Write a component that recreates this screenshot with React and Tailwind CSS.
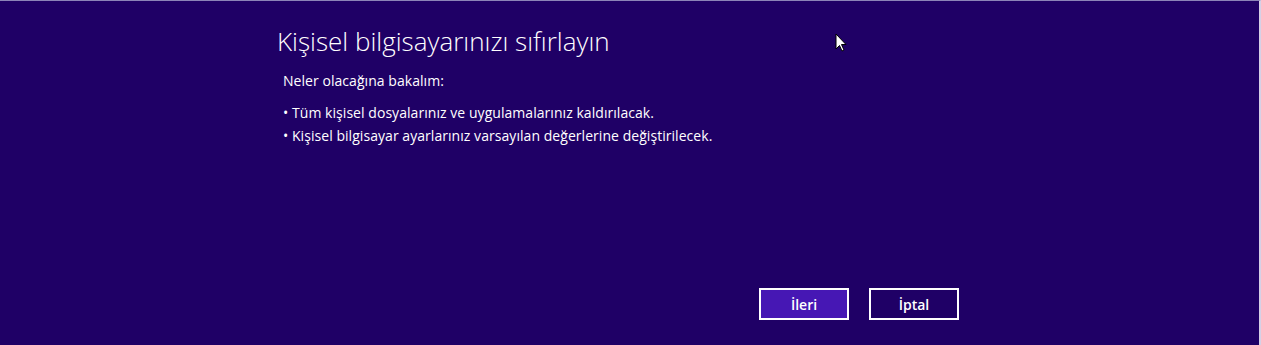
export default function App() {
  return (
    <div
      className="relative w-[1261px] h-[345px] overflow-hidden bg-[#1f0066] border-t border-t-[#8c84b8] border-r-2 border-r-[#d6d0e6] text-white"
      style={{ fontFamily: '"Open Sans", "Noto Sans", sans-serif' }}
    >
      <div className="flex flex-col h-full pl-[277px] pr-[300px]">
        <h1 className="mt-[23px] text-[26px] font-light leading-[34px]">
          Kişisel bilgisayarınızı sıfırlayın
        </h1>
        <div className="ml-[6px] mt-[13px] text-[14px] leading-[20px] tracking-[0.05px]">
          <p>Neler olacağına bakalım:</p>
          <ul className="mt-[12px] flex flex-col gap-[3px]">
            <li>• Tüm kişisel dosyalarınız ve uygulamalarınız kaldırılacak.</li>
            <li>• Kişisel bilgisayar ayarlarınız varsayılan değerlerine değiştirilecek.</li>
          </ul>
        </div>
        <div className="mt-auto mb-[25px] flex justify-end gap-[20px]">
          <button className="w-[90px] h-[32px] border-2 border-white bg-[#4617b4] text-[14px] font-semibold">
            İleri
          </button>
          <button className="w-[90px] h-[32px] border-2 border-white bg-[#1f0066] text-[14px] font-semibold">
            İptal
          </button>
        </div>
      </div>
      <svg
        className="absolute left-[835px] top-[32px]"
        width="13"
        height="20"
        viewBox="0 0 13 20"
      >
        <path d="M1 1 L1 16 L4.5 12.5 L7 18 L9 17 L6.5 11.5 L11 11.5 Z" fill="#fff" stroke="#000" strokeWidth="1" />
      </svg>
    </div>
  );
}
